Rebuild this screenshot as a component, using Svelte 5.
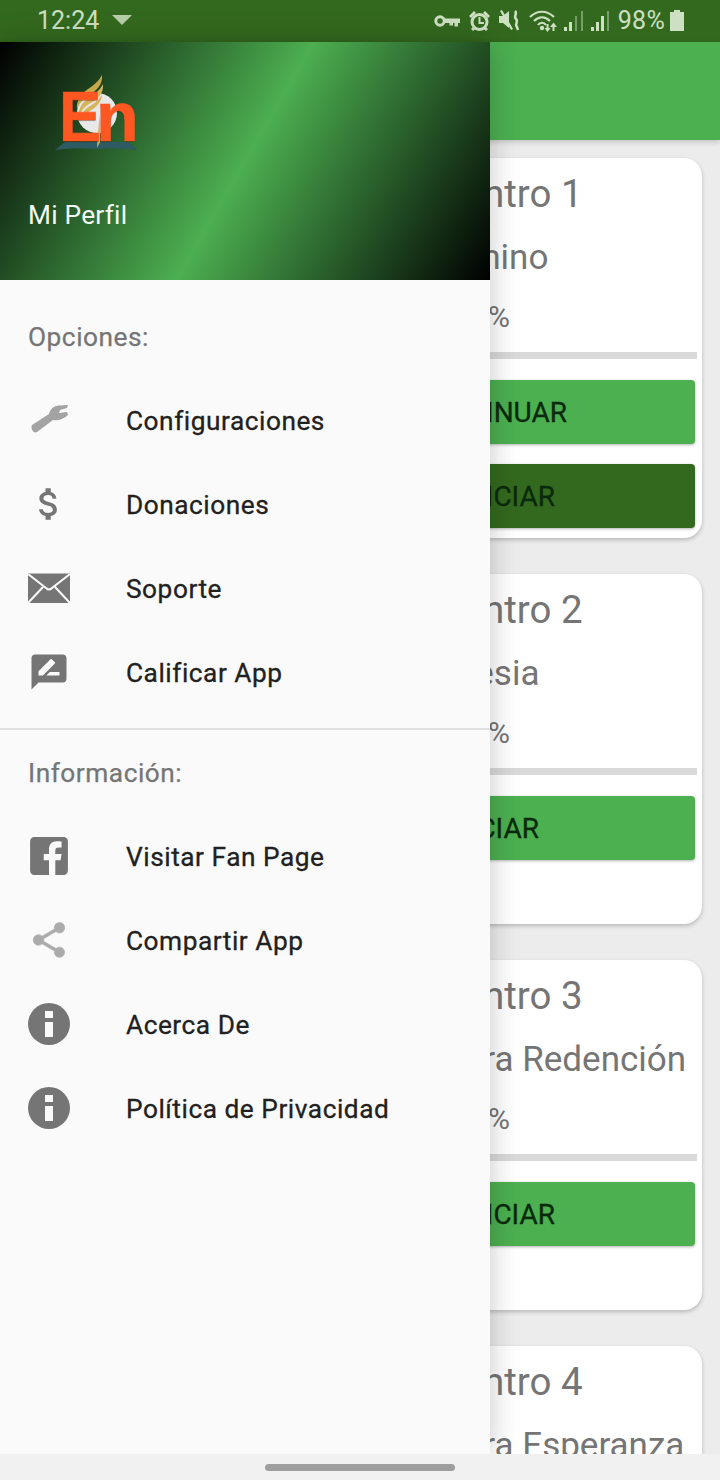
<script>
  const cards = [
    { title: 'Encuentro 1', sub: 'El Camino', pct: 'Avance 0%', actions: [{ label: 'CONTINUAR', cls: 'a' }, { label: 'INICIAR', cls: 'b dark' }] },
    { title: 'Encuentro 2', sub: 'La Iglesia', pct: 'Avance 0%', actions: [{ label: 'INICIAR', cls: 'c' }], tall: true },
    { title: 'Encuentro 3', sub: 'Nuestra Redención', pct: 'Avance 0%', actions: [{ label: 'INICIAR', cls: 'b' }], tall: true },
    { title: 'Encuentro 4', sub: 'Nuestra Esperanza', pct: 'Avance 0%', actions: [{ label: 'INICIAR', cls: 'b' }], tall: true }
  ];
  const wrench = 'M4 26 L21 15 C22 10 26 7 31 6.5 L40 6 L39 9 L32 11 L31 14 L39 13 L40 16 C36 20 30 22 25 21 L9 33 C6 35 2 30 4 26Z';
</script>

<div class="screen">
  <header class="status">
    <div class="status-left">
      <span class="clock">12:24</span>
      <svg class="caret" width="20" height="10" viewBox="0 0 20 10"><path d="M0 0H20L10 10Z" /></svg>
    </div>
    <div class="status-right">
      <svg width="26" height="12" viewBox="0 0 26 12"><circle cx="6" cy="6" r="4.200" fill="none" stroke-width="3" /><path d="M10 3.500H26V8H24V11.500H20.500V8H19V10.500H15.500V8H10Z" /></svg>
      <svg width="23" height="21" viewBox="0 0 23 21"><circle cx="11.500" cy="12" r="7.500" fill="none" stroke-width="3" /><path d="M10.500 7H12.500V12H16V14H10.500Z" /><path d="M1 6L6 1L8 3L3 8ZM22 6L17 1L15 3L20 8ZM5 17L7.500 19L5 21L3 19ZM18 17L15.500 19L18 21L20 19Z" /></svg>
      <svg width="22" height="21" viewBox="0 0 22 21"><path d="M0 6H4L10 1V18L4 13H0Z" /><path d="M1 1L3 0L14 19L12 20Z" /><path d="M16 1C19 4 14 6 17 9C20 12 15 14 18 17L19 20" fill="none" stroke-width="2.500" /></svg>
      <svg width="28" height="22" viewBox="0 0 28 22"><path d="M1 7C8 0 18 0 25 7M5 11C10 6 16 6 21 11M9 15C11 12 15 12 17 15" fill="none" stroke-width="2.200" /><circle cx="13" cy="18" r="2.200" /><path d="M17.500 14H19.500V18H21.500L18.500 22L15.500 18H17.500ZM23.500 21H25.500V17H28L24.500 12.500L21 17H23.500Z" /></svg>
      <svg class="bars" width="20" height="20" viewBox="0 0 20 20"><path d="M0 16H3V20H0ZM5 11H8V20H5Z" /><path class="dim" d="M11 5H13V20H11ZM17 0H19V20H17Z" /></svg>
      <svg class="bars" width="18" height="20" viewBox="0 0 18 20"><path d="M0 16H3V20H0ZM5 11H8V20H5ZM10 5H13V20H10Z" /><path class="dim" d="M16 0H18V20H16Z" /></svg>
      <span class="batt-text">98%</span>
      <svg width="14" height="21" viewBox="0 0 14 21"><path d="M4 0H10V2H14V21H0V2H4Z" /></svg>
    </div>
  </header>

  <div class="appbar"></div>

  <main class="list">
    {#each cards as c}
      <article class="card" class:tall={c.tall}>
        <h2>{c.title}</h2>
        <p class="sub">{c.sub}</p>
        <p class="pct">{c.pct}</p>
        <div class="bar"></div>
        <div class="actions">
          {#each c.actions as a}
            <div class="btn {a.cls}">{a.label}</div>
          {/each}
        </div>
      </article>
    {/each}
  </main>

  <aside class="drawer">
    <div class="drawer-head">
      <div class="logo">
        <svg width="90" height="84" viewBox="0 0 90 84">
          <path d="M5 80L15 72H78L88 80C70 78 55 78 47 79C35 78 20 78 5 80Z" fill="#2e5a63" />
          <circle cx="47" cy="43" r="20" fill="#e8e8e8" />
          <path d="M52 5C53 15 46 21 38 26C33 29 29 34 27 39C26 31 31 24 38 19C44 15 49 11 52 5Z" fill="#c9a84a" />
          <path d="M53 14C54 24 47 30 39 34C34 37 31 41 29 46C28 39 32 32 39 28C45 24 50 20 53 14Z" fill="#d4b55c" />
          <path d="M52 24C52 31 47 37 40 41C35 44 32 48 31 52C30 46 33 40 40 36C45 33 50 29 52 24Z" fill="#d4b55c" />
          <path d="M47 78L48 62L50 44L50 72Z" fill="#d4b55c" />
        </svg>
        <span class="en"><span class="e">E</span><span class="n">n</span></span>
      </div>
      <div class="profile">Mi Perfil</div>
    </div>

    <nav class="menu">
      <div class="label">Opciones:</div>
      <div class="row"><svg class="ico" viewBox="0 0 42 42"><path d={wrench} fill="#a3a3a3" /></svg><span>Configuraciones</span></div>
      <div class="row"><svg class="ico" viewBox="0 0 24 24"><path d="M11.8 10.9c-2.27-.59-3-1.2-3-2.15 0-1.09 1.01-1.85 2.7-1.85 1.78 0 2.44.85 2.5 2.1h2.21c-.07-1.72-1.12-3.3-3.21-3.81V3h-3v2.16c-1.94.42-3.5 1.68-3.5 3.61 0 2.31 1.91 3.46 4.7 4.13 2.5.6 3 1.48 3 2.41 0 .69-.49 1.79-2.7 1.79-2.06 0-2.87-.92-2.98-2.1h-2.2c.12 2.19 1.76 3.42 3.68 3.83V21h3v-2.15c1.95-.37 3.5-1.5 3.5-3.55 0-2.84-2.43-3.81-4.7-4.4z" /></svg><span>Donaciones</span></div>
      <div class="row"><svg class="ico" viewBox="0 0 42 42"><rect x="0" y="6.500" width="42" height="29.500" /><path d="M0 7L18 21C20 23 22 23 24 21L42 7M0 36L15 20M42 36L27 20" fill="none" stroke="#fafafa" stroke-width="2" /></svg><span>Soporte</span></div>
      <div class="row"><svg class="ico" viewBox="0 0 24 24"><path d="M20 2H4c-1.100 0-2 .9-2 2v18l4-4h14c1.100 0 2-.9 2-2V4c0-1.100-.9-2-2-2zM6 14v-2.470l6.880-6.880c.2-.2.510-.2.710 0l1.770 1.770c.2.2.2.510 0 .710L8.470 14H6zm12 0h-7.500l2-2H18v2z" /></svg><span>Calificar App</span></div>
      <div class="divider"></div>
      <div class="label">Información:</div>
      <div class="row"><svg class="ico" viewBox="2 2 20 20"><path d="M5 3h14a2 2 0 0 1 2 2v14a2 2 0 0 1-2 2h-4v-7h2.500l.5-3h-3V9.500c0-.9.4-1.500 1.500-1.500H18V5.200c-.4-.1-1.300-.2-2.300-.2-2.300 0-3.700 1.400-3.700 3.900V11H9.500v3H12v7H5a2 2 0 0 1-2-2V5a2 2 0 0 1 2-2z" /></svg><span>Visitar Fan Page</span></div>
      <div class="row"><svg class="ico light" viewBox="0 0 24 24"><path stroke="#ababab" stroke-width=".35" d="M18 16.080c-.76 0-1.440.3-1.960.77L8.910 12.700c.05-.23.09-.46.09-.7s-.04-.47-.09-.7l7.050-4.110c.54.5 1.250.81 2.040.81 1.660 0 3-1.340 3-3s-1.340-3-3-3-3 1.340-3 3c0 .24.04.47.09.7L8.040 9.810C7.500 9.310 6.790 9 6 9c-1.660 0-3 1.340-3 3s1.340 3 3 3c.79 0 1.500-.31 2.040-.81l7.120 4.160c-.05.21-.08.43-.08.65 0 1.610 1.310 2.920 2.920 2.920 1.610 0 2.920-1.310 2.920-2.920s-1.310-2.920-2.920-2.920z" /></svg><span>Compartir App</span></div>
      <div class="row"><svg class="ico" viewBox="0 0 42 42"><circle cx="21" cy="21" r="21" /><path d="M17 8H25V15H17ZM17 19H25V34H17Z" fill="#fafafa" /></svg><span>Acerca De</span></div>
      <div class="row"><svg class="ico" viewBox="0 0 42 42"><circle cx="21" cy="21" r="21" /><path d="M17 8H25V15H17ZM17 19H25V34H17Z" fill="#fafafa" /></svg><span>Política de Privacidad</span></div>
    </nav>
  </aside>

  <footer class="navbar"><div class="pill"></div></footer>
</div>

<style>
  :global(body) { margin: 0; background: #ececec; }
  .screen {
    position: relative;
    width: 720px;
    height: 1480px;
    overflow: hidden;
    background: #ececec;
    font-family: Roboto, sans-serif;
  }
  .status {
    height: 42px;
    background: #33691e;
    display: flex;
    justify-content: space-between;
    align-items: center;
    padding: 0 36px 0 37px;
    color: #cde0c2;
  }
  .status svg { fill: #cde0c2; stroke: #cde0c2; stroke-width: 0; flex: none; display: block; }
  .status svg [fill='none'] { fill: none; }
  .status-left { display: flex; align-items: center; gap: 13px; }
  .clock { font-size: 25px; line-height: 42px; }
  .caret { opacity: .85; margin-top: -3px; }
  .status-right { display: flex; align-items: center; gap: 8px; margin-top: -1px; }
  .bars { margin-left: -1px; }
  .bars .dim { opacity: .45; }
  .batt-text { font-size: 25px; line-height: 42px; margin-left: 1px; margin-right: -3px; letter-spacing: .3px; }
  .appbar {
    height: 98px;
    background: #4caf50;
    box-shadow: 0 2px 6px rgba(0, 0, 0, .18);
    position: relative;
  }
  .list { display: flex; flex-direction: column; gap: 36px; padding: 18px 18px 0; }
  .card {
    background: #fff;
    border-radius: 18px;
    box-shadow: 0 2px 4px rgba(0, 0, 0, .22);
    padding: 15px 7px 10px 0;
    flex: none;
  }
  .card.tall { padding-bottom: 64px; }
  h2, .sub, .pct { margin: 0; color: #757575; font-weight: 400; white-space: nowrap; }
  h2 { font-size: 38.500px; line-height: 42px; margin-left: 360px; }
  .sub { font-size: 35px; line-height: 42px; margin-top: 22px; margin-left: 373px; }
  .pct { font-size: 30px; line-height: 40px; margin-top: 18px; margin-left: 348px; }
  .bar { height: 7px; background: #d9d9d9; margin: 15px -2px 0 370px; }
  .actions { display: flex; flex-direction: column; gap: 20px; margin-top: 21px; }
  .btn {
    height: 64px;
    box-sizing: border-box;
    margin-left: 370px;
    padding-top: 1px;
    background: #4caf50;
    border-radius: 4px;
    box-shadow: 0 1px 3px rgba(0, 0, 0, .3);
    color: #0b2a0d;
    font-size: 28px;
    font-weight: 400;
    -webkit-text-stroke: .3px #0b2a0d;
    display: flex;
    align-items: center;
    justify-content: flex-end;
  }
  .btn.a { padding-right: 128px; }
  .btn.b { padding-right: 140px; }
  .btn.c { padding-right: 156px; }
  .btn.dark { background: #33691e; }
  .drawer {
    position: absolute;
    left: 0;
    top: 42px;
    width: 490px;
    height: 1412px;
    background: #fafafa;
    box-shadow: 0 0 28px rgba(0, 0, 0, .22);
    display: flex;
    flex-direction: column;
  }
  .drawer-head {
    height: 238px;
    flex: none;
    box-sizing: border-box;
    background: linear-gradient(120deg, #000 0%, #4caf50 50%, #000 100%);
    display: flex;
    flex-direction: column;
    padding: 28px 0 0 28px;
  }
  .logo { position: relative; width: 90px; height: 84px; margin-left: 22px; }
  .logo svg { display: block; }
  .en {
    position: absolute;
    left: 9px;
    top: 7px;
    font-family: 'Liberation Sans', sans-serif;
    font-weight: 700;
    font-size: 70px;
    line-height: 80px;
    color: #ff5722;
    -webkit-text-stroke: .6px #ff5722;
    text-shadow: 0 1px 1px rgba(0, 0, 0, .35);
    display: flex;
  }
  .e { display: block; width: 37px; transform: scaleX(.9); transform-origin: left; }
  .n { display: block; }
  .profile { color: #f4fbf4; font-size: 26.250px; line-height: 30px; margin-top: 46px; letter-spacing: .25px; }
  .menu { padding-top: 14px; }
  .label {
    height: 84px;
    line-height: 86px;
    padding-left: 28px;
    font-size: 26.250px;
    font-weight: 400;
    letter-spacing: .53px;
    -webkit-text-stroke: .25px #757575;
    color: #757575;
  }
  .row { height: 84px; display: flex; align-items: center; padding-left: 28px; gap: 56px; }
  .row span { font-size: 26.250px; font-weight: 400; color: #212121; letter-spacing: .53px; -webkit-text-stroke: .3px #212121; padding-top: 1px; }
  .ico { width: 42px; height: 42px; flex: none; fill: #757575; display: block; }
  .ico.light { fill: #ababab; }
  .divider { height: 2px; background: #e0e0e0; margin-top: 14px; }
  .navbar {
    position: absolute;
    left: 0;
    right: 0;
    bottom: 0;
    height: 26px;
    background: #f1f1f1;
    display: flex;
    justify-content: center;
    align-items: center;
  }
  .pill { width: 190px; height: 7px; border-radius: 4px; background: #9e9e9e; }
</style>
